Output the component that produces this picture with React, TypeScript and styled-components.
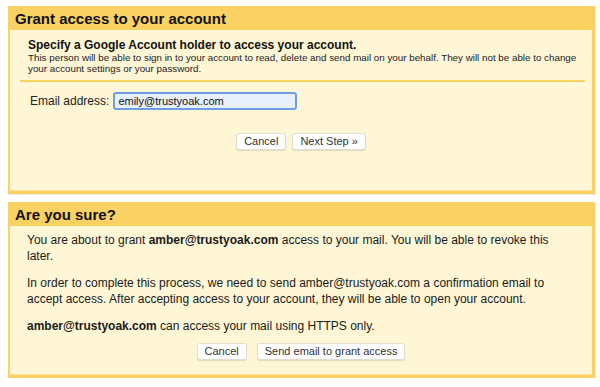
import styled, { createGlobalStyle } from "styled-components";

const GlobalStyle = createGlobalStyle`
  body {
    margin: 0;
    background: #fff;
    font-family: "Liberation Sans", Arial, sans-serif;
    color: #222;
  }
`;

const Page = styled.div`
  display: flex;
  flex-direction: column;
  gap: 8px;
  padding: 6px 5px 0 8px;
`;

const Panel = styled.section<{ $height: number }>`
  display: flex;
  flex-direction: column;
  height: ${(p) => p.$height}px;
  background: #fad163;
  box-shadow: 1px 1px 0 rgba(120, 100, 60, 0.15);
`;

const PanelTitle = styled.h2`
  margin: 0;
  height: 24px;
  line-height: 25px;
  padding: 0 7px;
  font-size: 15px;
  font-weight: bold;
  color: #111;
`;

const PanelBody = styled.div`
  flex: 1;
  margin: 0 3px 3px 2px;
  background: #fff6d6;
  border-bottom: 1px solid #fde39a;
`;

const Intro = styled.div`
  margin: 0 7px 0 10px;
  padding: 8px 2px 6px 8px;
  border-bottom: 2px solid #fad163;
`;

const IntroHeading = styled.div`
  font-size: 12px;
  line-height: 14px;
  font-weight: bold;
  color: #111;
`;

const IntroNote = styled.div`
  font-size: 9.8px;
  line-height: 11px;
  color: #222;
`;

const FieldRow = styled.div`
  display: flex;
  align-items: center;
  gap: 4px;
  margin: 10px 0 0 20px;
  font-size: 12px;
`;

const EmailInput = styled.input`
  box-sizing: border-box;
  width: 184px;
  height: 18px;
  padding: 0 3px;
  border: 2px solid #6f9de2;
  border-radius: 3px;
  background: #e9f0fd;
  font-family: inherit;
  font-size: 11px;
  color: #111;
  outline: none;
`;

const ButtonRow = styled.div<{ $gap: number; $top: number }>`
  display: flex;
  justify-content: center;
  gap: ${(p) => p.$gap}px;
  margin-top: ${(p) => p.$top}px;
`;

const Button = styled.button`
  height: 17px;
  padding: 0 7px;
  background: #fff;
  border: 1px solid #e0ddd3;
  border-radius: 3px;
  box-shadow: 0 1px 1px rgba(0, 0, 0, 0.12);
  font-family: inherit;
  font-size: 11px;
  line-height: 15px;
  color: #333;
`;

const Message = styled.div`
  padding: 7px 17px 0 17px;
`;

const Para = styled.p`
  margin: 0 0 12px 0;
  font-size: 12px;
  line-height: 15.5px;
  color: #1a1a1a;
`;

export default function App() {
  return (
    <>
      <GlobalStyle />
      <Page>
        <Panel $height={188}>
          <PanelTitle>Grant access to your account</PanelTitle>
          <PanelBody>
            <Intro>
              <IntroHeading>Specify a Google Account holder to access your account.</IntroHeading>
              <IntroNote>
                This person will be able to sign in to your account to read, delete and send mail on your
                behalf. They will not be able to change your account settings or your password.
              </IntroNote>
            </Intro>
            <FieldRow>
              <label htmlFor="email">Email address:</label>
              <EmailInput id="email" defaultValue="emily@trustyoak.com" />
            </FieldRow>
            <ButtonRow $gap={6} $top={23}>
              <Button>Cancel</Button>
              <Button>Next Step »</Button>
            </ButtonRow>
          </PanelBody>
        </Panel>
        <Panel $height={176}>
          <PanelTitle>Are you sure?</PanelTitle>
          <PanelBody>
            <Message>
              <Para>
                You are about to grant <b>amber@trustyoak.com</b> access to your mail. You will be able
                to revoke this later.
              </Para>
              <Para>
                In order to complete this process, we need to send amber@trustyoak.com a confirmation
                email to accept access. After accepting access to your account, they will be able to open
                your account.
              </Para>
              <Para>
                <b>amber@trustyoak.com</b> can access your mail using HTTPS only.
              </Para>
            </Message>
            <ButtonRow $gap={10} $top={-4}>
              <Button>Cancel</Button>
              <Button>Send email to grant access</Button>
            </ButtonRow>
          </PanelBody>
        </Panel>
      </Page>
    </>
  );
}
